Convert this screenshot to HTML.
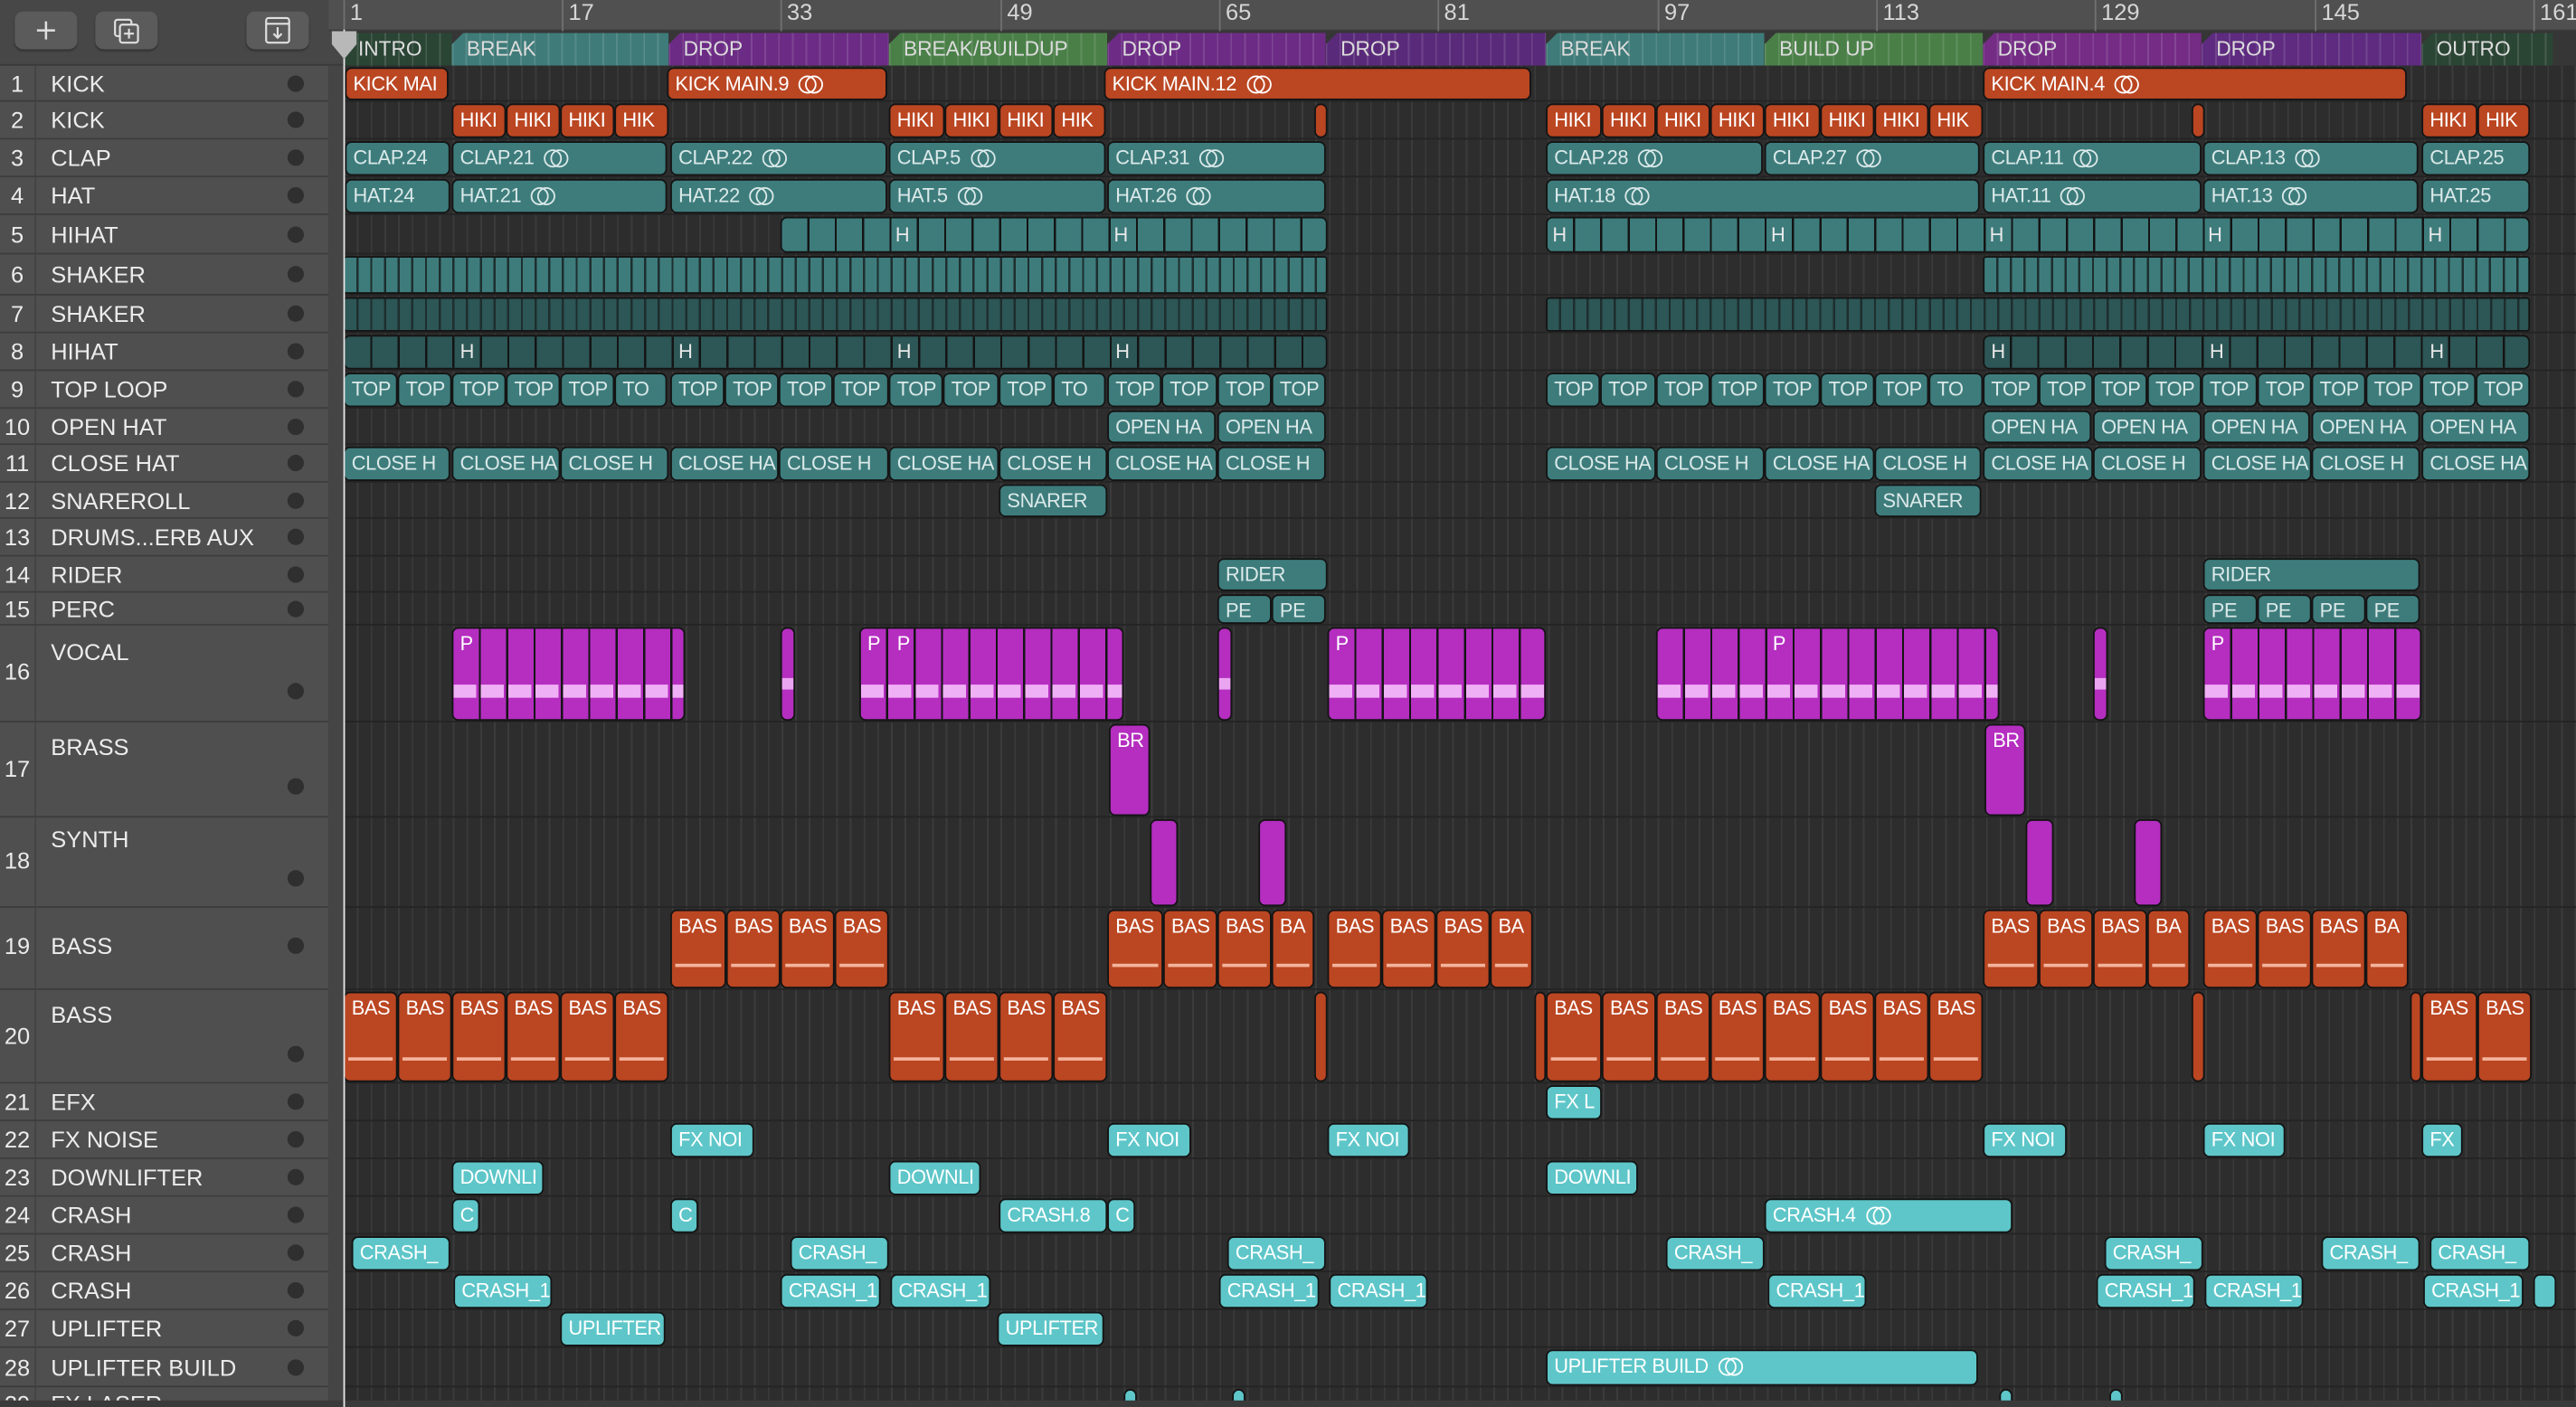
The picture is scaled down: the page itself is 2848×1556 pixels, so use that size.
<!DOCTYPE html>
<html><head><meta charset="utf-8"><style>
*{margin:0;padding:0;box-sizing:border-box}
html,body{width:2848px;height:1556px;overflow:hidden;background:#2d2d2d}
#s{position:absolute;left:0;top:0;width:1568px;height:857px;transform:scale(1.81633,1.81564);transform-origin:0 0;font-family:"Liberation Sans",sans-serif;background:#2d2d2d;overflow:hidden}
#lp{position:absolute;left:0;top:0;width:200px;height:857px;background:#4f4f4f}
#tb{position:absolute;left:0;top:0;width:209px;height:40px;background:#474747;border-bottom:1px solid #3a3a3a}
.btn{position:absolute;top:7px;width:38px;height:23px;background:#5b5b5b;border-radius:5px;box-shadow:0 1px 1px #333}
.tr{position:absolute;left:0;width:200px;border-bottom:1px solid #3d3d3d;color:#ececec;font-size:14px}
.tr .n{position:absolute;left:0;width:22px;text-align:center;height:100%;border-right:1px solid #444}
.tr .nm{position:absolute;left:31px}
.tr .dt{position:absolute;left:175px;width:10px;height:10px;border-radius:50%;background:#2f2f2f}
#gut{position:absolute;left:200px;top:40px;width:9px;height:817px;background:#454545}
#ph{position:absolute;left:209px;top:18px;width:1px;height:839px;background:#e8e8e8;z-index:5}
#ru{position:absolute;left:200px;top:0;width:1368px;height:19px;background:#505050;border-bottom:1px solid #3a3a3a}
.bn{position:absolute;top:0;height:19px;border-left:1px solid #707070;color:#d6d6d6;font-size:14px;padding-left:3px;line-height:15px}
#mk{position:absolute;left:209px;top:19px;width:1359px;height:21px;background:#363636}
.mk{position:absolute;top:1px;height:20px;color:#dcdcdc;font-size:12.5px;line-height:20px;padding-left:9px;clip-path:polygon(7px 0,100% 0,100% 100%,0 100%,0 7px);background-image:repeating-linear-gradient(90deg,rgba(255,255,255,.12) 0 1px,transparent 1px 8.333px)}
#ar{position:absolute;left:209px;top:40px;width:1359px;height:817px;background-color:#2d2d2d;background-image:repeating-linear-gradient(90deg,#3b3b3b 0 1px,transparent 1px 8.333px)}
.row{position:absolute;left:209px;width:1359px;border-bottom:1px solid #242424}
.r{position:absolute;top:1px;bottom:1px;border:1.3px solid #141414;border-radius:4px;font-size:12px;letter-spacing:-0.2px;color:#fff;padding:2px 0 0 4px;line-height:15px;white-space:nowrap;overflow:hidden}
.o{background:#bb4622}
.t{background:#3e7c7c;color:#dbe9e9}
.d{background:#2d5656;color:#cfe0e0}
.m{background:#b52ec0}
.c{background:#5ec6c9}
.st{background-image:repeating-linear-gradient(90deg,transparent 0 15.4px,#141414 15.4px 16.67px)}
.st8{background-image:repeating-linear-gradient(90deg,transparent 0 7px,#1e2e2e 7px 8.333px)}
.lbl{position:absolute;font-size:12px;color:#e8e8e8;z-index:2}
.lp{position:relative;display:inline-block;width:14px;height:10px;vertical-align:-1px;margin-left:6px}
.lp:before,.lp:after{content:"";position:absolute;top:0;width:9px;height:9px;border:1.2px solid currentColor;border-radius:50%}
.lp:before{left:0}.lp:after{left:4px}
.wv{position:absolute;left:0;right:0;top:55%;height:7px;background:#f0b2f5;opacity:.9}
.bl{position:absolute;left:2px;right:2px;bottom:12px;height:2px;background:#f3b49c}
.vw{position:absolute;top:34px;left:0;right:0;height:8px;background:repeating-linear-gradient(90deg,#f0b0f5 0 14px,transparent 14px 16.67px)}
</style></head><body><div id="s">

<div id="lp"></div>
<div id="tb">
<div class="btn" style="left:9px"><svg width="38" height="23"><path d="M19 6v11M13.5 11.5h11" stroke="#e0e0e0" stroke-width="1.4"/></svg></div>
<div class="btn" style="left:58px"><svg width="38" height="23"><rect x="12" y="5" width="10" height="10" rx="1.5" fill="none" stroke="#e0e0e0" stroke-width="1.2"/><rect x="15" y="8" width="11" height="11" rx="1.5" fill="#5b5b5b" stroke="#e0e0e0" stroke-width="1.2"/><path d="M20.5 10.5v6M17.5 13.5h6" stroke="#e0e0e0" stroke-width="1.2"/></svg></div>
<div class="btn" style="left:150px"><svg width="38" height="23"><rect x="12" y="4" width="14" height="15" rx="1.5" fill="none" stroke="#e0e0e0" stroke-width="1.2"/><path d="M12 7.5h14M19 9.5v6.5M16.5 13.5l2.5 2.5 2.5-2.5" fill="none" stroke="#e0e0e0" stroke-width="1.2"/></svg></div>
</div>

<div class="tr" style="top:40px;height:22px"><span class="n" style="line-height:22px">1</span><span class="nm" style="line-height:22px">KICK</span><span class="dt" style="top:6px"></span></div>
<div class="tr" style="top:62px;height:23px"><span class="n" style="line-height:23px">2</span><span class="nm" style="line-height:23px">KICK</span><span class="dt" style="top:6px"></span></div>
<div class="tr" style="top:85px;height:23px"><span class="n" style="line-height:23px">3</span><span class="nm" style="line-height:23px">CLAP</span><span class="dt" style="top:6px"></span></div>
<div class="tr" style="top:108px;height:23px"><span class="n" style="line-height:23px">4</span><span class="nm" style="line-height:23px">HAT</span><span class="dt" style="top:6px"></span></div>
<div class="tr" style="top:131px;height:24px"><span class="n" style="line-height:24px">5</span><span class="nm" style="line-height:24px">HIHAT</span><span class="dt" style="top:7px"></span></div>
<div class="tr" style="top:155px;height:25px"><span class="n" style="line-height:25px">6</span><span class="nm" style="line-height:25px">SHAKER</span><span class="dt" style="top:7px"></span></div>
<div class="tr" style="top:180px;height:23px"><span class="n" style="line-height:23px">7</span><span class="nm" style="line-height:23px">SHAKER</span><span class="dt" style="top:6px"></span></div>
<div class="tr" style="top:203px;height:23px"><span class="n" style="line-height:23px">8</span><span class="nm" style="line-height:23px">HIHAT</span><span class="dt" style="top:6px"></span></div>
<div class="tr" style="top:226px;height:23px"><span class="n" style="line-height:23px">9</span><span class="nm" style="line-height:23px">TOP LOOP</span><span class="dt" style="top:6px"></span></div>
<div class="tr" style="top:249px;height:22px"><span class="n" style="line-height:22px">10</span><span class="nm" style="line-height:22px">OPEN HAT</span><span class="dt" style="top:6px"></span></div>
<div class="tr" style="top:271px;height:23px"><span class="n" style="line-height:23px">11</span><span class="nm" style="line-height:23px">CLOSE HAT</span><span class="dt" style="top:6px"></span></div>
<div class="tr" style="top:294px;height:22px"><span class="n" style="line-height:22px">12</span><span class="nm" style="line-height:22px">SNAREROLL</span><span class="dt" style="top:6px"></span></div>
<div class="tr" style="top:316px;height:23px"><span class="n" style="line-height:23px">13</span><span class="nm" style="line-height:23px">DRUMS...ERB AUX</span><span class="dt" style="top:6px"></span></div>
<div class="tr" style="top:339px;height:22px"><span class="n" style="line-height:22px">14</span><span class="nm" style="line-height:22px">RIDER</span><span class="dt" style="top:6px"></span></div>
<div class="tr" style="top:361px;height:20px"><span class="n" style="line-height:20px">15</span><span class="nm" style="line-height:20px">PERC</span><span class="dt" style="top:5px"></span></div>
<div class="tr" style="top:381px;height:59px"><span class="n" style="padding-top:20px">16</span><span class="nm" style="top:8px">VOCAL</span><span class="dt" style="top:35px"></span></div>
<div class="tr" style="top:440px;height:58px"><span class="n" style="padding-top:20px">17</span><span class="nm" style="top:7px">BRASS</span><span class="dt" style="top:34px"></span></div>
<div class="tr" style="top:498px;height:55px"><span class="n" style="padding-top:18px">18</span><span class="nm" style="top:5px">SYNTH</span><span class="dt" style="top:32px"></span></div>
<div class="tr" style="top:553px;height:50px"><span class="n" style="line-height:46px">19</span><span class="nm" style="line-height:46px">BASS</span><span class="dt" style="top:18px"></span></div>
<div class="tr" style="top:603px;height:57px"><span class="n" style="padding-top:20px">20</span><span class="nm" style="top:7px">BASS</span><span class="dt" style="top:34px"></span></div>
<div class="tr" style="top:660px;height:23px"><span class="n" style="line-height:23px">21</span><span class="nm" style="line-height:23px">EFX</span><span class="dt" style="top:6px"></span></div>
<div class="tr" style="top:683px;height:23px"><span class="n" style="line-height:23px">22</span><span class="nm" style="line-height:23px">FX NOISE</span><span class="dt" style="top:6px"></span></div>
<div class="tr" style="top:706px;height:23px"><span class="n" style="line-height:23px">23</span><span class="nm" style="line-height:23px">DOWNLIFTER</span><span class="dt" style="top:6px"></span></div>
<div class="tr" style="top:729px;height:23px"><span class="n" style="line-height:23px">24</span><span class="nm" style="line-height:23px">CRASH</span><span class="dt" style="top:6px"></span></div>
<div class="tr" style="top:752px;height:23px"><span class="n" style="line-height:23px">25</span><span class="nm" style="line-height:23px">CRASH</span><span class="dt" style="top:6px"></span></div>
<div class="tr" style="top:775px;height:23px"><span class="n" style="line-height:23px">26</span><span class="nm" style="line-height:23px">CRASH</span><span class="dt" style="top:6px"></span></div>
<div class="tr" style="top:798px;height:23px"><span class="n" style="line-height:23px">27</span><span class="nm" style="line-height:23px">UPLIFTER</span><span class="dt" style="top:6px"></span></div>
<div class="tr" style="top:821px;height:24px"><span class="n" style="line-height:24px">28</span><span class="nm" style="line-height:24px">UPLIFTER BUILD</span><span class="dt" style="top:7px"></span></div>
<div class="tr" style="top:845px;height:12px"><span class="n" style="line-height:20px">29</span><span class="nm" style="line-height:20px">FX LASER</span></div>

<div id="gut"></div>
<div id="ru">
<div class="bn" style="left:9px">1</div><div class="bn" style="left:142px">17</div><div class="bn" style="left:275px">33</div><div class="bn" style="left:409px">49</div><div class="bn" style="left:542px">65</div><div class="bn" style="left:675px">81</div><div class="bn" style="left:809px">97</div><div class="bn" style="left:942px">113</div><div class="bn" style="left:1075px">129</div><div class="bn" style="left:1209px">145</div><div class="bn" style="left:1342px">161</div>
</div>
<div id="mk">
<div class="mk" style="left:0;width:66px;background-color:#2b4535">INTRO</div>
<div class="mk" style="left:66px;width:132px;background-color:#3f7b79">BREAK</div>
<div class="mk" style="left:198px;width:134px;background-color:#6c2b85">DROP</div>
<div class="mk" style="left:332px;width:133px;background-color:#4a8048">BREAK/BUILDUP</div>
<div class="mk" style="left:465px;width:133px;background-color:#6c2b85">DROP</div>
<div class="mk" style="left:598px;width:134px;background-color:#5a2a7a">DROP</div>
<div class="mk" style="left:732px;width:133px;background-color:#3f7b79">BREAK</div>
<div class="mk" style="left:865px;width:133px;background-color:#4a8048">BUILD UP</div>
<div class="mk" style="left:998px;width:133px;background-color:#742c85">DROP</div>
<div class="mk" style="left:1131px;width:134px;background-color:#5e2b80">DROP</div>
<div class="mk" style="left:1265px;width:80px;background-color:#2b4535">OUTRO</div>
</div>

<div id="ar"></div>
<div class="row" style="top:40px;height:22px"></div><div class="row" style="top:62px;height:23px"></div><div class="row" style="top:85px;height:23px"></div><div class="row" style="top:108px;height:23px"></div><div class="row" style="top:131px;height:24px"></div><div class="row" style="top:155px;height:25px"></div><div class="row" style="top:180px;height:23px"></div><div class="row" style="top:203px;height:23px"></div><div class="row" style="top:226px;height:23px"></div><div class="row" style="top:249px;height:22px"></div><div class="row" style="top:271px;height:23px"></div><div class="row" style="top:294px;height:22px"></div><div class="row" style="top:316px;height:23px"></div><div class="row" style="top:339px;height:22px"></div><div class="row" style="top:361px;height:20px"></div><div class="row" style="top:381px;height:59px"></div><div class="row" style="top:440px;height:58px"></div><div class="row" style="top:498px;height:55px"></div><div class="row" style="top:553px;height:50px"></div><div class="row" style="top:603px;height:57px"></div><div class="row" style="top:660px;height:23px"></div><div class="row" style="top:683px;height:23px"></div><div class="row" style="top:706px;height:23px"></div><div class="row" style="top:729px;height:23px"></div><div class="row" style="top:752px;height:23px"></div><div class="row" style="top:775px;height:23px"></div><div class="row" style="top:798px;height:23px"></div><div class="row" style="top:821px;height:24px"></div>

<div id="ph"></div>
<svg style="position:absolute;left:201px;top:19px;z-index:6" width="17" height="18"><path d="M1 0h15v8l-7.5 9L1 8z" fill="#b8b8b8"/></svg>

<div style="position:absolute;left:0;top:40px;width:1568px;height:22px">
<div class="r o" style="left:210px;width:63px">KICK MAI</div>
<div class="r o" style="left:406px;width:134px">KICK MAIN.9<i class="lp"></i></div>
<div class="r o" style="left:672px;width:260px">KICK MAIN.12<i class="lp"></i></div>
<div class="r o" style="left:1207px;width:258px">KICK MAIN.4<i class="lp"></i></div>
</div>
<div style="position:absolute;left:0;top:62px;width:1568px;height:23px">
<div class="r o" style="left:275px;width:33px">HIKI</div><div class="r o" style="left:308px;width:33px">HIKI</div><div class="r o" style="left:341px;width:33px">HIKI</div><div class="r o" style="left:374px;width:33px">HIK</div>
<div class="r o" style="left:541px;width:34px">HIKI</div><div class="r o" style="left:575px;width:33px">HIKI</div><div class="r o" style="left:608px;width:33px">HIKI</div><div class="r o" style="left:641px;width:32px">HIK</div>
<div class="r o" style="left:800px;width:8px;padding:0"></div>
<div class="r o" style="left:941px;width:34px">HIKI</div><div class="r o" style="left:975px;width:33px">HIKI</div><div class="r o" style="left:1008px;width:33px">HIKI</div><div class="r o" style="left:1041px;width:33px">HIKI</div><div class="r o" style="left:1074px;width:34px">HIKI</div><div class="r o" style="left:1108px;width:33px">HIKI</div><div class="r o" style="left:1141px;width:33px">HIKI</div><div class="r o" style="left:1174px;width:33px">HIK</div>
<div class="r o" style="left:1334px;width:8px;padding:0"></div>
<div class="r o" style="left:1474px;width:34px">HIKI</div><div class="r o" style="left:1508px;width:32px">HIK</div>
</div>
<div style="position:absolute;left:0;top:85px;width:1568px;height:23px">
<div class="r t" style="left:210px;width:64px">CLAP.24</div>
<div class="r t" style="left:275px;width:131px">CLAP.21<i class="lp"></i></div>
<div class="r t" style="left:408px;width:132px">CLAP.22<i class="lp"></i></div>
<div class="r t" style="left:541px;width:132px">CLAP.5<i class="lp"></i></div>
<div class="r t" style="left:674px;width:133px">CLAP.31<i class="lp"></i></div>
<div class="r t" style="left:941px;width:132px">CLAP.28<i class="lp"></i></div>
<div class="r t" style="left:1074px;width:131px">CLAP.27<i class="lp"></i></div>
<div class="r t" style="left:1207px;width:133px">CLAP.11<i class="lp"></i></div>
<div class="r t" style="left:1341px;width:131px">CLAP.13<i class="lp"></i></div>
<div class="r t" style="left:1474px;width:66px">CLAP.25</div>
</div>
<div style="position:absolute;left:0;top:108px;width:1568px;height:23px">
<div class="r t" style="left:210px;width:64px">HAT.24</div>
<div class="r t" style="left:275px;width:131px">HAT.21<i class="lp"></i></div>
<div class="r t" style="left:408px;width:132px">HAT.22<i class="lp"></i></div>
<div class="r t" style="left:541px;width:132px">HAT.5<i class="lp"></i></div>
<div class="r t" style="left:674px;width:133px">HAT.26<i class="lp"></i></div>
<div class="r t" style="left:941px;width:264px">HAT.18<i class="lp"></i></div>
<div class="r t" style="left:1207px;width:133px">HAT.11<i class="lp"></i></div>
<div class="r t" style="left:1341px;width:131px">HAT.13<i class="lp"></i></div>
<div class="r t" style="left:1474px;width:66px">HAT.25</div>
</div>
<div style="position:absolute;left:0;top:131px;width:1568px;height:24px">
<div class="r t st" style="left:475px;width:333px"></div>
<div class="r t st" style="left:941px;width:599px"></div>
<span class="lbl" style="left:545px;top:5px">H</span><span class="lbl" style="left:678px;top:5px">H</span><span class="lbl" style="left:945px;top:5px">H</span><span class="lbl" style="left:1078px;top:5px">H</span><span class="lbl" style="left:1211px;top:5px">H</span><span class="lbl" style="left:1344px;top:5px">H</span><span class="lbl" style="left:1478px;top:5px">H</span>
</div>
<div style="position:absolute;left:0;top:155px;width:1568px;height:25px">
<div class="r t st8" style="left:209px;width:599px;border-radius:2px"></div>
<div class="r t st8" style="left:1207px;width:333px;border-radius:2px"></div>
</div>
<div style="position:absolute;left:0;top:180px;width:1568px;height:23px">
<div class="r d st8" style="left:209px;width:599px;border-radius:2px"></div>
<div class="r d st8" style="left:941px;width:599px;border-radius:2px"></div>
</div>
<div style="position:absolute;left:0;top:203px;width:1568px;height:23px">
<div class="r d st" style="left:209px;width:599px"></div>
<div class="r d st" style="left:1207px;width:333px"></div>
<span class="lbl" style="left:280px;top:4px">H</span><span class="lbl" style="left:413px;top:4px">H</span><span class="lbl" style="left:546px;top:4px">H</span><span class="lbl" style="left:679px;top:4px">H</span><span class="lbl" style="left:1212px;top:4px">H</span><span class="lbl" style="left:1345px;top:4px">H</span><span class="lbl" style="left:1479px;top:4px">H</span>
</div>
<div style="position:absolute;left:0;top:226px;width:1568px;height:23px">
<div class="r t" style="left:209px;width:33px">TOP</div><div class="r t" style="left:242px;width:33px">TOP</div><div class="r t" style="left:275px;width:33px">TOP</div><div class="r t" style="left:308px;width:33px">TOP</div><div class="r t" style="left:341px;width:33px">TOP</div><div class="r t" style="left:374px;width:32px">TO</div>
<div class="r t" style="left:408px;width:33px">TOP</div><div class="r t" style="left:441px;width:33px">TOP</div><div class="r t" style="left:474px;width:33px">TOP</div><div class="r t" style="left:507px;width:34px">TOP</div><div class="r t" style="left:541px;width:33px">TOP</div><div class="r t" style="left:574px;width:34px">TOP</div><div class="r t" style="left:608px;width:33px">TOP</div><div class="r t" style="left:641px;width:32px">TO</div>
<div class="r t" style="left:674px;width:33px">TOP</div><div class="r t" style="left:707px;width:34px">TOP</div><div class="r t" style="left:741px;width:33px">TOP</div><div class="r t" style="left:774px;width:33px">TOP</div>
<div class="r t" style="left:941px;width:33px">TOP</div><div class="r t" style="left:974px;width:34px">TOP</div><div class="r t" style="left:1008px;width:33px">TOP</div><div class="r t" style="left:1041px;width:33px">TOP</div><div class="r t" style="left:1074px;width:34px">TOP</div><div class="r t" style="left:1108px;width:33px">TOP</div><div class="r t" style="left:1141px;width:33px">TOP</div><div class="r t" style="left:1174px;width:33px">TO</div>
<div class="r t" style="left:1207px;width:34px">TOP</div><div class="r t" style="left:1241px;width:33px">TOP</div><div class="r t" style="left:1274px;width:33px">TOP</div><div class="r t" style="left:1307px;width:33px">TOP</div><div class="r t" style="left:1340px;width:34px">TOP</div><div class="r t" style="left:1374px;width:33px">TOP</div><div class="r t" style="left:1407px;width:33px">TOP</div><div class="r t" style="left:1440px;width:34px">TOP</div><div class="r t" style="left:1474px;width:33px">TOP</div><div class="r t" style="left:1507px;width:33px">TOP</div>
</div>
<div style="position:absolute;left:0;top:249px;width:1568px;height:22px">
<div class="r t" style="left:674px;width:66px">OPEN HA</div><div class="r t" style="left:741px;width:66px">OPEN HA</div>
<div class="r t" style="left:1207px;width:66px">OPEN HA</div><div class="r t" style="left:1274px;width:66px">OPEN HA</div><div class="r t" style="left:1341px;width:65px">OPEN HA</div><div class="r t" style="left:1407px;width:66px">OPEN HA</div><div class="r t" style="left:1474px;width:66px">OPEN HA</div>
</div>
<div style="position:absolute;left:0;top:271px;width:1568px;height:23px">
<div class="r t" style="left:209px;width:65px">CLOSE H</div><div class="r t" style="left:275px;width:66px">CLOSE HA</div><div class="r t" style="left:341px;width:66px">CLOSE H</div><div class="r t" style="left:408px;width:66px">CLOSE HA</div><div class="r t" style="left:474px;width:67px">CLOSE H</div><div class="r t" style="left:541px;width:67px">CLOSE HA</div><div class="r t" style="left:608px;width:66px">CLOSE H</div><div class="r t" style="left:674px;width:67px">CLOSE HA</div><div class="r t" style="left:741px;width:66px">CLOSE H</div>
<div class="r t" style="left:941px;width:67px">CLOSE HA</div><div class="r t" style="left:1008px;width:66px">CLOSE H</div><div class="r t" style="left:1074px;width:67px">CLOSE HA</div><div class="r t" style="left:1141px;width:65px">CLOSE H</div><div class="r t" style="left:1207px;width:67px">CLOSE HA</div><div class="r t" style="left:1274px;width:66px">CLOSE H</div><div class="r t" style="left:1341px;width:66px">CLOSE HA</div><div class="r t" style="left:1407px;width:66px">CLOSE H</div><div class="r t" style="left:1474px;width:66px">CLOSE HA</div>
</div>
<div style="position:absolute;left:0;top:294px;width:1568px;height:22px">
<div class="r t" style="left:608px;width:66px">SNARER</div><div class="r t" style="left:1141px;width:65px">SNARER</div>
</div>
<div style="position:absolute;left:0;top:339px;width:1568px;height:22px">
<div class="r t" style="left:741px;width:67px">RIDER</div><div class="r t" style="left:1341px;width:132px">RIDER</div>
</div>
<div style="position:absolute;left:0;top:361px;width:1568px;height:20px">
<div class="r t" style="left:741px;width:33px">PE</div><div class="r t" style="left:774px;width:33px">PE</div>
<div class="r t" style="left:1341px;width:33px">PE</div><div class="r t" style="left:1374px;width:33px">PE</div><div class="r t" style="left:1407px;width:33px">PE</div><div class="r t" style="left:1440px;width:33px">PE</div>
</div>
<div style="position:absolute;left:0;top:381px;width:1568px;height:59px">
<div class="r m st" style="left:275px;width:142px"><div class="vw"></div></div>
<div class="r m" style="left:475px;width:9px"><div class="wv"></div></div>
<div class="r m st" style="left:523px;width:161px"><div class="vw"></div></div>
<div class="r m" style="left:741px;width:9px"><div class="wv"></div></div>
<div class="r m st" style="left:808px;width:133px"><div class="vw"></div></div>
<div class="r m st" style="left:1008px;width:209px"><div class="vw"></div></div>
<div class="r m" style="left:1274px;width:9px"><div class="wv"></div></div>
<div class="r m st" style="left:1341px;width:133px"><div class="vw"></div></div>
<span class="lbl" style="left:280px;top:4px;color:#fff">P</span><span class="lbl" style="left:528px;top:4px;color:#fff">P</span><span class="lbl" style="left:546px;top:4px;color:#fff">P</span><span class="lbl" style="left:813px;top:4px;color:#fff">P</span><span class="lbl" style="left:1079px;top:4px;color:#fff">P</span><span class="lbl" style="left:1346px;top:4px;color:#fff">P</span>
</div>
<div style="position:absolute;left:0;top:440px;width:1568px;height:58px">
<div class="r m" style="left:675px;width:25px">BR</div><div class="r m" style="left:1208px;width:25px">BR</div>
</div>
<div style="position:absolute;left:0;top:498px;width:1568px;height:55px">
<div class="r m" style="left:700px;width:17px"></div><div class="r m" style="left:766px;width:17px"></div><div class="r m" style="left:1233px;width:17px"></div><div class="r m" style="left:1299px;width:17px"></div>
</div>
<div style="position:absolute;left:0;top:553px;width:1568px;height:50px">
<div class="r o" style="left:408px;width:34px">BAS<div class="bl"></div></div><div class="r o" style="left:442px;width:33px">BAS<div class="bl"></div></div><div class="r o" style="left:475px;width:33px">BAS<div class="bl"></div></div><div class="r o" style="left:508px;width:33px">BAS<div class="bl"></div></div>
<div class="r o" style="left:674px;width:34px">BAS<div class="bl"></div></div><div class="r o" style="left:708px;width:33px">BAS<div class="bl"></div></div><div class="r o" style="left:741px;width:33px">BAS<div class="bl"></div></div><div class="r o" style="left:774px;width:26px">BA<div class="bl"></div></div>
<div class="r o" style="left:808px;width:33px">BAS<div class="bl"></div></div><div class="r o" style="left:841px;width:33px">BAS<div class="bl"></div></div><div class="r o" style="left:874px;width:33px">BAS<div class="bl"></div></div><div class="r o" style="left:907px;width:26px">BA<div class="bl"></div></div>
<div class="r o" style="left:1207px;width:34px">BAS<div class="bl"></div></div><div class="r o" style="left:1241px;width:33px">BAS<div class="bl"></div></div><div class="r o" style="left:1274px;width:33px">BAS<div class="bl"></div></div><div class="r o" style="left:1307px;width:26px">BA<div class="bl"></div></div>
<div class="r o" style="left:1341px;width:33px">BAS<div class="bl"></div></div><div class="r o" style="left:1374px;width:33px">BAS<div class="bl"></div></div><div class="r o" style="left:1407px;width:33px">BAS<div class="bl"></div></div><div class="r o" style="left:1440px;width:26px">BA<div class="bl"></div></div>
</div>
<div style="position:absolute;left:0;top:603px;width:1568px;height:57px">
<div class="r o" style="left:209px;width:33px">BAS<div class="bl"></div></div><div class="r o" style="left:242px;width:33px">BAS<div class="bl"></div></div><div class="r o" style="left:275px;width:33px">BAS<div class="bl"></div></div><div class="r o" style="left:308px;width:33px">BAS<div class="bl"></div></div><div class="r o" style="left:341px;width:33px">BAS<div class="bl"></div></div><div class="r o" style="left:374px;width:33px">BAS<div class="bl"></div></div>
<div class="r o" style="left:541px;width:34px">BAS<div class="bl"></div></div><div class="r o" style="left:575px;width:33px">BAS<div class="bl"></div></div><div class="r o" style="left:608px;width:33px">BAS<div class="bl"></div></div><div class="r o" style="left:641px;width:33px">BAS<div class="bl"></div></div>
<div class="r o" style="left:800px;width:8px;padding:0"></div><div class="r o" style="left:934px;width:7px;padding:0"></div>
<div class="r o" style="left:941px;width:34px">BAS<div class="bl"></div></div><div class="r o" style="left:975px;width:33px">BAS<div class="bl"></div></div><div class="r o" style="left:1008px;width:33px">BAS<div class="bl"></div></div><div class="r o" style="left:1041px;width:33px">BAS<div class="bl"></div></div><div class="r o" style="left:1074px;width:34px">BAS<div class="bl"></div></div><div class="r o" style="left:1108px;width:33px">BAS<div class="bl"></div></div><div class="r o" style="left:1141px;width:33px">BAS<div class="bl"></div></div><div class="r o" style="left:1174px;width:33px">BAS<div class="bl"></div></div>
<div class="r o" style="left:1334px;width:8px;padding:0"></div><div class="r o" style="left:1467px;width:7px;padding:0"></div>
<div class="r o" style="left:1474px;width:34px">BAS<div class="bl"></div></div><div class="r o" style="left:1508px;width:33px">BAS<div class="bl"></div></div>
</div>
<div style="position:absolute;left:0;top:660px;width:1568px;height:23px">
<div class="r c" style="left:941px;width:34px">FX L</div>
</div>
<div style="position:absolute;left:0;top:683px;width:1568px;height:23px">
<div class="r c" style="left:408px;width:51px">FX NOI</div><div class="r c" style="left:674px;width:51px">FX NOI</div><div class="r c" style="left:808px;width:50px">FX NOI</div><div class="r c" style="left:1207px;width:51px">FX NOI</div><div class="r c" style="left:1341px;width:50px">FX NOI</div><div class="r c" style="left:1474px;width:25px">FX</div>
</div>
<div style="position:absolute;left:0;top:706px;width:1568px;height:23px">
<div class="r c" style="left:275px;width:56px">DOWNLI</div><div class="r c" style="left:541px;width:56px">DOWNLI</div><div class="r c" style="left:941px;width:56px">DOWNLI</div>
</div>
<div style="position:absolute;left:0;top:729px;width:1568px;height:23px">
<div class="r c" style="left:275px;width:17px">C</div><div class="r c" style="left:408px;width:17px">C</div><div class="r c" style="left:608px;width:66px">CRASH.8</div><div class="r c" style="left:674px;width:17px">C</div><div class="r c" style="left:1074px;width:151px">CRASH.4<i class="lp"></i></div>
</div>
<div style="position:absolute;left:0;top:752px;width:1568px;height:23px">
<div class="r c" style="left:214px;width:60px">CRASH_</div><div class="r c" style="left:481px;width:60px">CRASH_</div><div class="r c" style="left:747px;width:60px">CRASH_</div><div class="r c" style="left:1014px;width:60px">CRASH_</div><div class="r c" style="left:1281px;width:60px">CRASH_</div><div class="r c" style="left:1413px;width:60px">CRASH_</div><div class="r c" style="left:1479px;width:61px">CRASH_</div>
</div>
<div style="position:absolute;left:0;top:775px;width:1568px;height:23px">
<div class="r c" style="left:276px;width:60px">CRASH_1</div><div class="r c" style="left:475px;width:61px">CRASH_1</div><div class="r c" style="left:542px;width:61px">CRASH_1</div><div class="r c" style="left:742px;width:61px">CRASH_1</div><div class="r c" style="left:809px;width:60px">CRASH_1</div><div class="r c" style="left:1076px;width:60px">CRASH_1</div><div class="r c" style="left:1276px;width:60px">CRASH_1</div><div class="r c" style="left:1342px;width:60px">CRASH_1</div><div class="r c" style="left:1475px;width:61px">CRASH_1</div><div class="r c" style="left:1542px;width:14px;padding:0"></div>
</div>
<div style="position:absolute;left:0;top:798px;width:1568px;height:23px">
<div class="r c" style="left:341px;width:64px">UPLIFTER</div><div class="r c" style="left:607px;width:65px">UPLIFTER</div>
</div>
<div style="position:absolute;left:0;top:821px;width:1568px;height:24px">
<div class="r c" style="left:941px;width:263px">UPLIFTER BUILD<i class="lp"></i></div>
</div>
<div style="position:absolute;left:0;top:845px;width:1568px;height:20px">
<div class="r c" style="left:684px;width:8px;padding:0"></div><div class="r c" style="left:750px;width:8px;padding:0"></div><div class="r c" style="left:1217px;width:8px;padding:0"></div><div class="r c" style="left:1284px;width:8px;padding:0"></div>
</div>
<div style="position:absolute;left:0;top:853px;width:1568px;height:4px;background:#3a3a3a"></div>
</div></body></html>
